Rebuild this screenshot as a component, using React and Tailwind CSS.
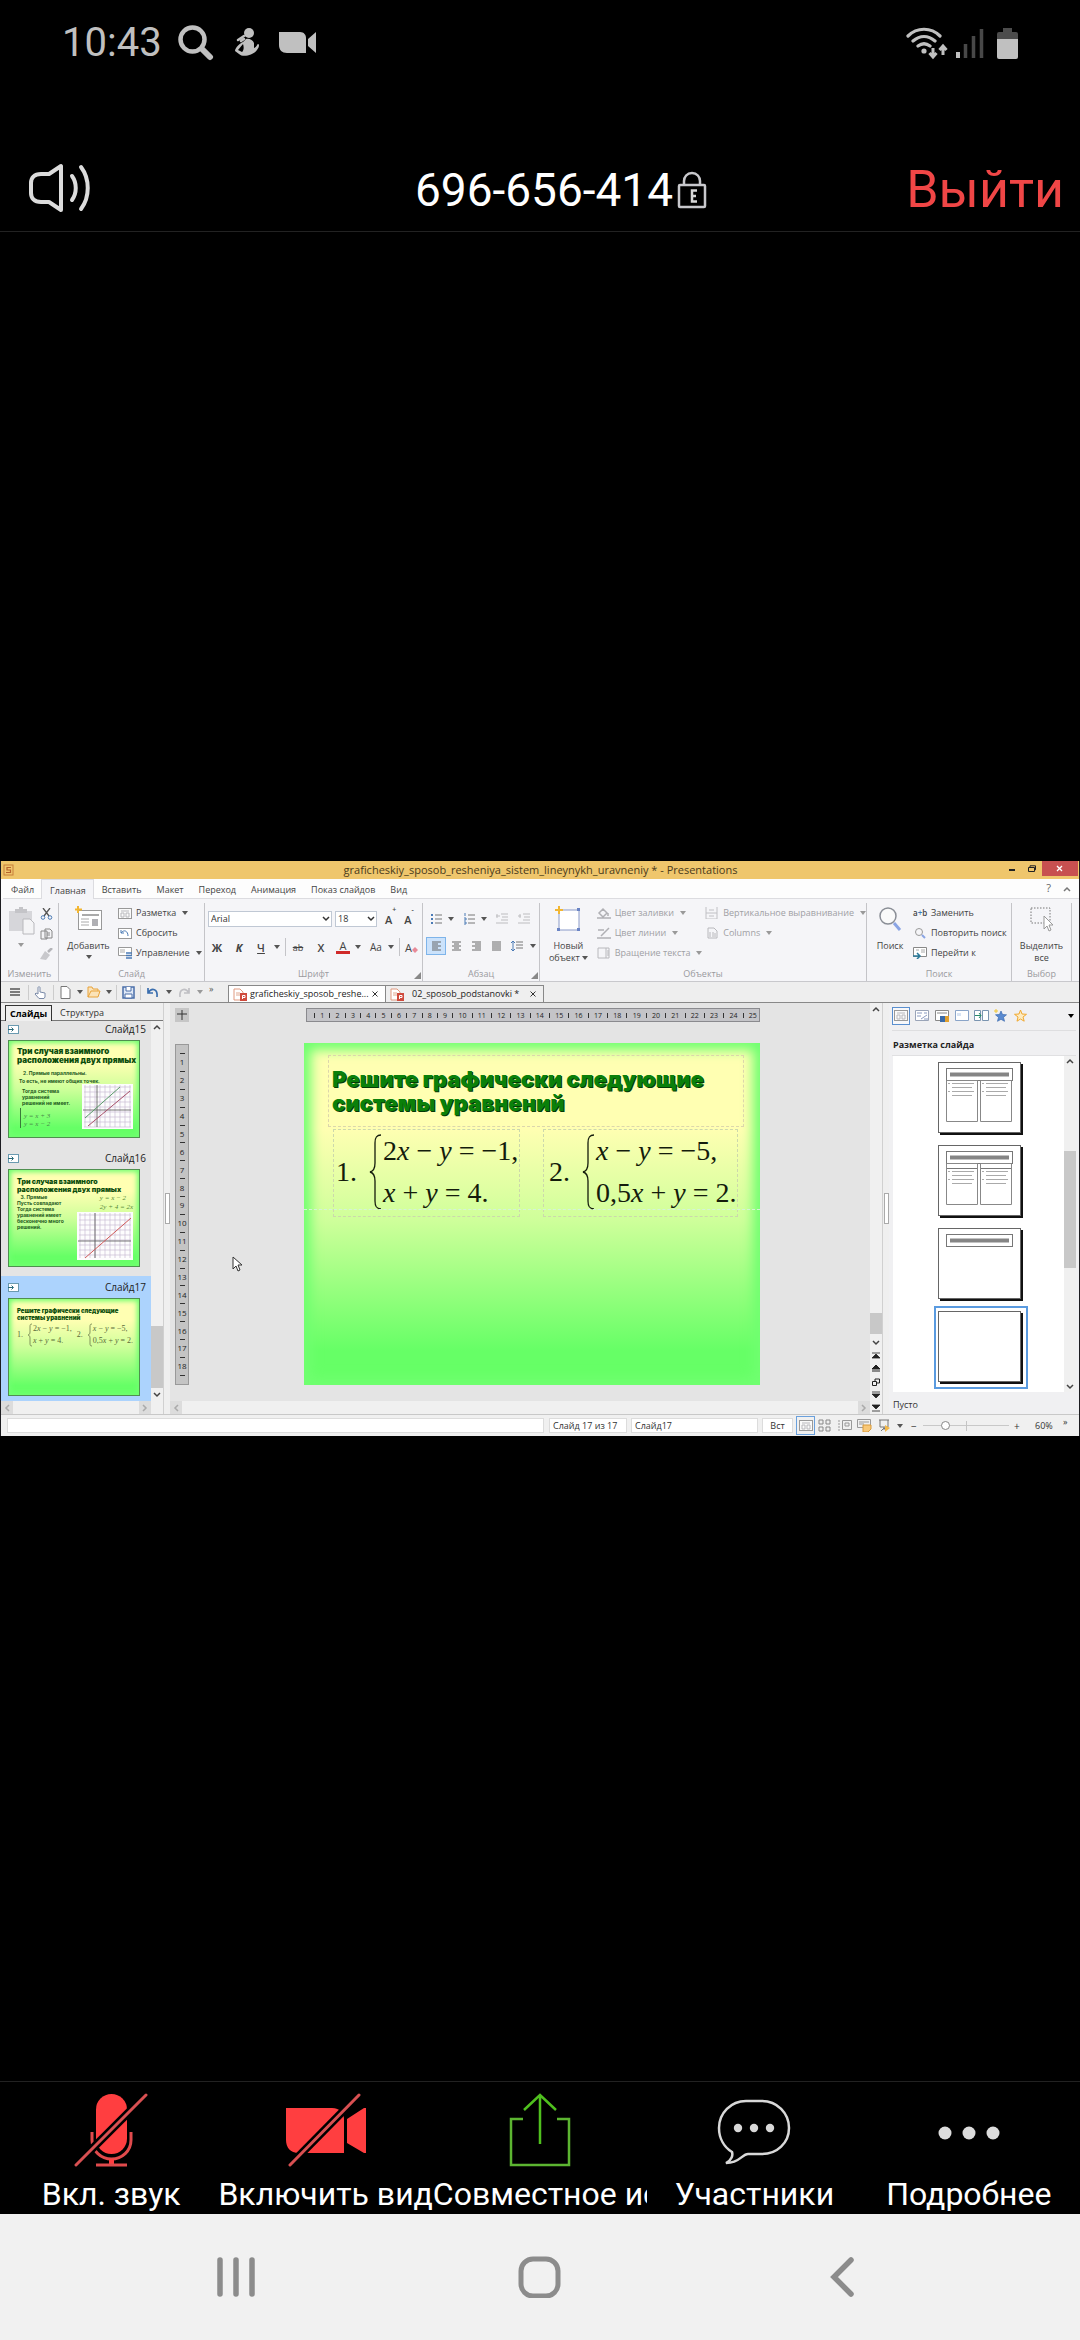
import { Fragment } from 'react';
import clsx from 'clsx';

const uiFont = "font-['Open_Sans','Noto_Sans',sans-serif]";

/* ---------- Small shared pieces ---------- */

function Svg({ w, h, children, className }) {
  return (
    <svg
      width={w}
      height={h}
      viewBox={`0 0 ${w} ${h}`}
      fill="none"
      className={clsx('shrink-0', className)}
      aria-hidden="true"
    >
      {children}
    </svg>
  );
}

function Caret({ className = 'text-[#555]' }) {
  return (
    <Svg w={6} h={4} className={className}>
      <path d="M0 0h6L3 4z" fill="currentColor" />
    </Svg>
  );
}

function Chevron({ dir = 'down', className = 'text-[#444]' }) {
  const paths = {
    down: 'M1 2l3 3 3-3',
    up: 'M1 6l3-3 3 3',
    left: 'M6 1L3 4l3 3',
    right: 'M2 1l3 3-3 3',
  };
  return (
    <Svg w={8} h={8} className={className}>
      <path d={paths[dir]} stroke="currentColor" strokeWidth="1.5" />
    </Svg>
  );
}

function VLine({ className = 'h-4 bg-[#c4c4c8]' }) {
  return <span className={clsx('w-px shrink-0', className)} />;
}

/* ---------- Phone status bar ---------- */

function StatusBar() {
  return (
    <div className="flex h-[86px] items-center justify-between pl-[62px] pr-[62px] text-[#c0c0c0]">
      <div className="flex items-center">
        <span className="w-[100px] text-[40px] leading-none">10:43</span>
        <Svg w={36} h={36} className="ml-4">
          <circle cx="14.5" cy="14.5" r="12" stroke="currentColor" strokeWidth="4.5" />
          <path d="M24 24l8 8" stroke="currentColor" strokeWidth="6" strokeLinecap="round" />
        </Svg>
        <Svg w={28} h={32} className="ml-5">
          <circle cx="15" cy="6" r="5" fill="currentColor" />
          <path d="M10 9L4 13M10 12l-3 2" stroke="currentColor" strokeWidth="2.5" strokeLinecap="round" />
          <path d="M12 12c3-1 7 1 8 4v5c3-1 3-4 4-4s2 2-1 6c-3 5-14 8-18 4L1 24c0-3 5-8 8-9zM9 17l-5 6 4 2c2-2 2-5 1-8z" fill="currentColor" fillRule="evenodd" />
        </Svg>
        <Svg w={38} h={22} className="ml-4">
          <path d="M1 0h21c4 0 6 3 6 6v15H9c-5 0-8-3-8-8zM38 0v21l-8-7V7z" fill="currentColor" />
        </Svg>
      </div>
      <div className="flex items-center">
        <Svg w={42} h={34}>
          <path d="M2 10c9-9 23-9 32 0M7 15c7-6 15-6 22 0M12 20c4-3 8-3 12 0" stroke="currentColor" strokeWidth="3.2" strokeLinecap="round" />
          <circle cx="18" cy="25" r="2.6" fill="currentColor" />
          <path d="M27 22v8M23.500 27l3.500 4 3.500-4M37 29v-8M33.500 24l3.500-4 3.500 4" stroke="currentColor" strokeWidth="3" />
        </Svg>
        <Svg w={28} h={32} className="ml-2">
          <path d="M2 25v6" stroke="currentColor" strokeWidth="4" />
          <path d="M9.500 17v14M17.500 9v22M25.500 2v29" stroke="#484848" strokeWidth="3.500" />
        </Svg>
        <Svg w={21} h={33} className="ml-[13px]">
          <path d="M6 1h9v4h4a2 2 0 012 2v6H0V7a2 2 0 012-2h4z" fill="#4c4c4c" />
          <path d="M0 12h21v18a2 2 0 01-2 2H2a2 2 0 01-2-2z" fill="currentColor" />
        </Svg>
      </div>
    </div>
  );
}

/* ---------- Meeting header ---------- */

function MeetingHeader() {
  return (
    <header className="flex h-[146px] items-end border-b border-[#222] pb-[14px]">
      <div className="flex-1 pl-7">
        <button type="button" aria-label="Динамик" className="flex h-[58px] items-center">
          <Svg w={64} h={50}>
            <path d="M13 11h8l12-8v44l-12-8h-8c-7 0-10-4-10-9v-10c0-5 3-9 10-9z" stroke="#dcdcdc" strokeWidth="4" strokeLinejoin="round" />
            <path d="M44 13c5 7 5 17 0 24M53 4c9 12 9 30 0 42" stroke="#dcdcdc" strokeWidth="4" strokeLinecap="round" />
          </Svg>
        </button>
      </div>
      <h1 className="text-[46px] leading-[54px] text-white">696-656-414</h1>
      <div className="flex flex-1 items-center justify-between pl-1 pr-4">
        <Svg w={30} h={38}>
          <path d="M7 14v-4c0-4 3-8 8-8s8 4 8 8v4" stroke="#c8c8cc" strokeWidth="2.500" />
          <rect x="2" y="14" width="26" height="22" rx="1" stroke="#c8c8cc" strokeWidth="2.500" />
          <path d="M20 19.500h-5v11h5M15 25h4" stroke="#d8d8d8" strokeWidth="2.500" />
        </Svg>
        <button type="button" className="text-[52px] leading-[54px] text-[#f04646]">Выйти</button>
      </div>
    </header>
  );
}

/* ---------- Presentations window: title and menu ---------- */

function TitleBar() {
  return (
    <div className="flex h-[18px] bg-[#efc66c]">
      <div className="flex flex-1 items-center pl-[2px]">
        <Svg w={11} h={12}>
          <rect x="1" y="1" width="9" height="10" stroke="#c87f3a" />
          <path d="M8 3.500H4v2.500h3.500v2.500H3" stroke="#b5612c" strokeWidth="1.200" />
        </Svg>
      </div>
      <span className="whitespace-nowrap text-[11px] leading-[18px] text-[#4a3a1a]">
        graficheskiy_sposob_resheniya_sistem_lineynykh_uravneniy * - Presentations
      </span>
      <div className="flex flex-1 items-start justify-end pr-px">
        <button type="button" aria-label="Свернуть" className="flex h-4 w-5 items-center justify-center">
          <Svg w={8} h={8}><path d="M1 5h6" stroke="#222" strokeWidth="2" /></Svg>
        </button>
        <button type="button" aria-label="Развернуть" className="flex h-4 w-5 items-center justify-center">
          <Svg w={8} h={8}><path d="M.5 2.500h6v4h-6zM2 2.500V.8h5.500v4H6.500" stroke="#222" /></Svg>
        </button>
        <button type="button" aria-label="Закрыть" className="flex h-[15px] w-9 items-center justify-center bg-[#c75050]">
          <Svg w={8} h={8}><path d="M1 1l5 5M6 1L1 6" stroke="#fff" strokeWidth="1.300" /></Svg>
        </button>
      </div>
    </div>
  );
}

const menuTabs = ['Файл', 'Главная', 'Вставить', 'Макет', 'Переход', 'Анимация', 'Показ слайдов', 'Вид'];

function MenuRow() {
  return (
    <div className="flex h-5 items-stretch bg-[#fdfdfd] pl-[2px] text-[9px] text-[#444]">
      {menuTabs.map((tab) => (
        <button
          key={tab}
          type="button"
          className={clsx(
            'pl-2 pr-[7px] pt-px leading-none',
            tab === 'Главная' ? 'border border-b-0 border-[#dcdce0] bg-[#f5f5f8]' : 'border-b border-[#dcdce0]'
          )}
        >
          {tab}
        </button>
      ))}
      <div className="flex flex-1 items-center justify-end gap-3 border-b border-[#dcdce0] pr-2 text-[11px] text-[#666]">
        <span>?</span>
        <Chevron dir="up" className="text-[#777]" />
      </div>
    </div>
  );
}

/* ---------- Ribbon ---------- */

function Group({ label, launcher, className, children }) {
  return (
    <section className={clsx('flex shrink-0 flex-col border-r border-[#c4c4c8]', className)}>
      <div className="flex flex-1">{children}</div>
      <div className="relative h-[15px] text-center text-[9px] leading-[16px] text-[#9a9a9e]">
        {label}
        {launcher && (
          <Svg w={7} h={7} className="absolute bottom-[2px] right-px">
            <path d="M7 0v7H0z" fill="#888" />
          </Svg>
        )}
      </div>
    </section>
  );
}

function RibbonItem({ icon, label, caret, muted }) {
  return (
    <button
      type="button"
      className={clsx('flex h-5 items-center whitespace-nowrap', muted ? 'text-[#a0a0a4]' : 'text-[#444]')}
    >
      <span className="flex w-[18px] shrink-0">{icon}</span>
      {label}
      {caret && (
        <span className="ml-[6px]">
          <Caret className={muted ? 'text-[#999]' : 'text-[#555]'} />
        </span>
      )}
    </button>
  );
}

function BigButton({ icon, lines, caret, inlineCaret, className }) {
  return (
    <button type="button" className={clsx('flex flex-col items-center text-[#444]', className)}>
      <span className="flex h-[34px] items-start">{icon}</span>
      {lines.map((line, i) => (
        <span key={line} className="flex items-center gap-[2px] leading-[12px]">
          {line}
          {inlineCaret && i === lines.length - 1 && <Caret />}
        </span>
      ))}
      {caret && <span className="flex h-[10px] items-center"><Caret /></span>}
    </button>
  );
}

function ListIcon({ numbered, color = '#777' }) {
  return (
    <Svg w={11} h={12}>
      <path d="M4 2h7M4 6h7M4 10h7" stroke={color} />
      {numbered ? (
        <path d="M1 0v3M0 5h2v2H0M0 9h2v2H0" stroke="#4a7ab5" />
      ) : (
        <path d="M0 2h2M0 6h2M0 10h2" stroke="#4a7ab5" strokeWidth="2" />
      )}
    </Svg>
  );
}

function IndentIcon({ flip }) {
  return (
    <Svg w={12} h={12}>
      <path d={flip ? 'M5 1h7M6 4h6M5 7h7M0 10h12M0 3h3M2 1v4' : 'M5 1h7M6 4h6M5 7h7M0 10h12M0 3h4M1 1v4'} stroke="#bdbdc0" />
    </Svg>
  );
}

const alignPaths = {
  left: 'M0 1h9M0 3h6M0 5h9M0 7h6M0 9h9',
  center: 'M0 1h9M2 3h5M0 5h9M2 7h5M0 9h9',
  right: 'M0 1h9M3 3h6M0 5h9M3 7h6M0 9h9',
  justify: 'M0 1h9M0 3h9M0 5h9M0 7h9M0 9h9',
};

function Combo({ label, value, className }) {
  return (
    <div className={clsx('relative flex h-4 items-center border border-[#c0c8d4] bg-white', className)}>
      <select
        aria-label={label}
        defaultValue={value}
        className="h-[14px] w-full appearance-none bg-transparent pl-[2px] text-[9px] leading-[14px] text-[#333] outline-none"
      >
        <option>{value}</option>
      </select>
      <span className="pointer-events-none absolute right-px">
        <Chevron className="text-[#333]" />
      </span>
    </div>
  );
}

function SlideMiniIcon({ color = '#999', accent = '#b8b8bc' }) {
  return (
    <Svg w={14} h={11}>
      <rect x=".5" y=".5" width="13" height="10" fill="#fafafa" stroke={color} />
      <path d="M3 3h8M3 5h3v4H3zM8 5h3v4H8z" stroke={accent} />
    </Svg>
  );
}

function Ribbon() {
  return (
    <div className="flex h-[83px] border-b border-[#c8c8cc] bg-[#f5f5f8] pt-1 text-[9px]">
      {/* Изменить */}
      <Group label="Изменить" className="w-[58px]">
        <button type="button" aria-label="Вставить" className="flex w-[36px] flex-col items-center gap-2 pl-[4px] pt-1">
          <Svg w={27} h={28}>
            <path d="M1 4h23v20H1z" fill="#d6d6da" />
            <path d="M7 2h4V0h4v2h4v4H7z" fill="#c4c4c8" />
            <path d="M15 12h7l4 4v11H15z" fill="#f4f4f6" stroke="#b8b8bc" />
          </Svg>
          <Caret className="text-[#999]" />
        </button>
        <div className="flex flex-col gap-[8px] pl-[3px] pt-[5px]">
          <Svg w={13} h={12}>
            <path d="M3 0l6 8M10 0L4 8" stroke="#555" strokeWidth="1.300" />
            <circle cx="3" cy="9.500" r="1.800" stroke="#4a7ab5" />
            <circle cx="10" cy="9.500" r="1.800" stroke="#4a7ab5" />
          </Svg>
          <Svg w={13} h={12}>
            <path d="M1 3h6v8H1zM5 1h5l2 2v7H5z" fill="#f4f4f6" stroke="#888" />
            <path d="M7 5h3M7 7h3" stroke="#888" />
          </Svg>
          <Svg w={13} h={12}>
            <path d="M12 0L8 4" stroke="#b4b4b8" strokeWidth="2.500" />
            <path d="M5 3l5 4-4 5-6-1z" fill="#c8c8cc" />
          </Svg>
        </div>
      </Group>

      {/* Слайд */}
      <Group label="Слайд" className="w-[146px]">
        <BigButton
          className="w-[59px] pt-[3px]"
          lines={['Добавить']}
          caret
          icon={
            <Svg w={28} h={26}>
              <rect x="3.500" y="4.500" width="23" height="19" fill="#fff" stroke="#999" />
              <path d="M7 9h17" stroke="#aaa" strokeWidth="2" />
              <path d="M6 13h8M6 16h8M6 19h8" stroke="#aaa" />
              <rect x="17" y="13" width="6" height="7" fill="#b0b0b4" />
              <path d="M3 0v7M0 3.500h7" stroke="#f2b632" strokeWidth="2" />
            </Svg>
          }
        />
        <div className="flex flex-col">
          <RibbonItem icon={<SlideMiniIcon />} label="Разметка" caret />
          <RibbonItem
            icon={<Svg w={14} h={11}><rect x=".5" y=".5" width="13" height="10" fill="#fff" stroke="#999" /><path d="M3 5V2M3 5h3M3 5c3-4 7-2 7 3" stroke="#4a7ab5" /></Svg>}
            label="Сбросить"
          />
          <RibbonItem
            icon={<Svg w={14} h={12}><path d="M.5.5h13v8H.5z" fill="#fff" stroke="#999" /><path d="M2 3h5M2 5h5" stroke="#aaa" /><path d="M8 6h6M8 8.500h6M8 11h6" stroke="#4a7ab5" strokeWidth="1.500" /></Svg>}
            label="Управление"
            caret
          />
        </div>
      </Group>

      {/* Шрифт */}
      <Group label="Шрифт" launcher className="w-[218px]">
        <div className="flex w-full flex-col pl-[3px] pt-2 text-[#444]">
          <div className="flex items-center">
            <Combo label="Шрифт" value="Arial" className="w-[124px]" />
            <Combo label="Размер" value="18" className="ml-[3px] w-[42px]" />
            <button type="button" className="ml-2 flex text-[11px] font-semibold leading-none">A<sup className="text-[7px]">+</sup></button>
            <button type="button" className="ml-[8px] flex text-[11px] font-semibold leading-none">A<sup className="text-[7px]">-</sup></button>
          </div>
          <div className="mt-3 flex h-4 items-center text-[11px] leading-none">
            <button type="button" className="w-[18px] font-bold">Ж</button>
            <button type="button" className="ml-1 w-[18px] font-bold italic">К</button>
            <button type="button" className="ml-1 w-[18px] font-semibold underline">Ч</button>
            <span className="ml-[4px]"><Caret /></span>
            <VLine className="ml-[5px] h-[18px] bg-[#c4c4c8]" />
            <button type="button" className="ml-[6px] w-[12px] text-[9px] line-through">ab</button>
            <button type="button" className="ml-[10px] w-[14px] font-semibold">X</button>
            <button type="button" className="ml-[8px] w-[14px] border-b-[3px] border-[#d02a2a] text-[11px] leading-[10px]">A</button>
            <span className="ml-[5px]"><Caret /></span>
            <button type="button" className="ml-[8px] w-[14px] text-[10px]">Aa</button>
            <span className="ml-[5px]"><Caret /></span>
            <VLine className="ml-[5px] h-[18px] bg-[#c4c4c8]" />
            <button type="button" className="ml-[5px] flex items-end">
              A
              <Svg w={6} h={6}><path d="M0 3l3-3 3 3-3 3z" fill="#e88a98" /></Svg>
            </button>
          </div>
        </div>
      </Group>

      {/* Абзац */}
      <Group label="Абзац" launcher className="w-[117px]">
        <div className="flex w-full flex-col pl-[3px] pt-2">
          <div className="flex h-4 items-center pl-[5px]">
            <ListIcon />
            <span className="ml-[6px]"><Caret /></span>
            <span className="ml-[10px]"><ListIcon numbered /></span>
            <span className="ml-[6px]"><Caret /></span>
            <span className="ml-[9px]"><IndentIcon /></span>
            <span className="ml-[10px]"><IndentIcon flip /></span>
          </div>
          <div className="mt-[10px] flex h-[18px] items-center">
            {Object.entries(alignPaths).map(([name, d]) => (
              <button
                key={name}
                type="button"
                aria-label={name}
                className={clsx(
                  'flex h-[18px] w-5 items-center justify-center border',
                  name === 'left' ? 'border-[#7eb4ea] bg-[#cbe2fb]' : 'border-transparent'
                )}
              >
                <Svg w={9} h={10}><path d={d} stroke="#666" /></Svg>
              </button>
            ))}
            <Svg w={12} h={12} className="ml-[5px]">
              <path d="M5 2h7M5 5h7M5 8h7" stroke="#777" />
              <path d="M2 1v10M0 3l2-2 2 2M0 9l2 2 2-2" stroke="#4a7ab5" />
            </Svg>
            <span className="ml-[7px]"><Caret /></span>
          </div>
        </div>
      </Group>

      {/* Объекты */}
      <Group label="Объекты" className="min-w-0 flex-1">
        <BigButton
          className="w-[57px] pt-[3px]"
          lines={['Новый', 'объект']}
          inlineCaret
          icon={
            <Svg w={26} h={28}>
              <path d="M4 4h20v20H4z" fill="#fff" stroke="#8a9ac8" />
              <path d="M22 2h3v3h-3zM2 22h3v3H2zM22 22h3v3h-3z" fill="#6a84c4" />
              <path d="M4 0v8M0 4h8" stroke="#f2b632" strokeWidth="2" />
            </Svg>
          }
        />
        <div className="flex w-[109px] flex-col">
          <RibbonItem muted caret label="Цвет заливки" icon={<Svg w={14} h={12}><path d="M0 11h14M2 6l4-4 4 4-4 4zM11 6v3" stroke="#b0b0b4" strokeWidth="1.500" /></Svg>} />
          <RibbonItem muted caret label="Цвет линии" icon={<Svg w={14} h={12}><path d="M0 11h14M4 9L12 1M1 3h6" stroke="#b0b0b4" strokeWidth="1.500" /></Svg>} />
          <RibbonItem muted caret label="Вращение текста" icon={<Svg w={14} h={12}><path d="M1 1h11v10H1zM9 1v10M11 3v6" stroke="#b8b8bc" /></Svg>} />
        </div>
        <div className="flex flex-col">
          <RibbonItem muted caret label="Вертикальное выравнивание" icon={<Svg w={14} h={12}><path d="M1 0v12h11V0M1 6h11M4 3h5M4 9h5" stroke="#c0c0c4" /></Svg>} />
          <RibbonItem muted caret label="Columns" icon={<Svg w={14} h={12}><path d="M3 1h6l3 3v7H3zM5 5v5M8 5v5M10 6v4" stroke="#b8b8bc" /></Svg>} />
        </div>
      </Group>

      {/* Поиск */}
      <Group label="Поиск" className="w-[145px]">
        <BigButton
          className="w-[46px] pt-[3px]"
          lines={['Поиск']}
          icon={
            <Svg w={26} h={28}>
              <circle cx="11" cy="10" r="8" fill="#fafafa" stroke="#8a8e96" strokeWidth="1.500" />
              <path d="M17 17l6 7" stroke="#8aa4e4" strokeWidth="3" />
            </Svg>
          }
        />
        <div className="flex flex-col">
          <RibbonItem icon={<span className="text-[8px] font-semibold">a<span className="text-[#3a7ab5]">+</span>b</span>} label="Заменить" />
          <RibbonItem icon={<Svg w={14} h={12}><circle cx="6" cy="5" r="3.500" stroke="#999" /><path d="M9 8l3 3" stroke="#8aa4e4" strokeWidth="2" /></Svg>} label="Повторить поиск" />
          <RibbonItem icon={<Svg w={14} h={12}><path d="M.5.500h13v9H.5z" fill="#fff" stroke="#888" /><path d="M3 3h3M8 3h4M8 5h4" stroke="#aaa" /><path d="M0 9h6M4 6l3 3-3 3" stroke="#2a7a9a" strokeWidth="1.500" /></Svg>} label="Перейти к" />
        </div>
      </Group>

      {/* Выбор */}
      <Group label="Выбор" className="w-[60px]">
        <BigButton
          className="w-full pt-[3px]"
          lines={['Выделить', 'все']}
          icon={
            <Svg w={26} h={28}>
              <path d="M2 2h19v15H2z" stroke="#777" strokeDasharray="1.500 1.500" />
              <path d="M15 10v13l3-3 2 5 2-1-2-5h4z" fill="#fff" stroke="#999" />
            </Svg>
          }
        />
      </Group>
      <div className="w-[7px]" />
    </div>
  );
}

/* ---------- Quick access toolbar and document tabs ---------- */

function DocTab({ name, active }) {
  return (
    <div
      className={clsx(
        'flex h-[17px] w-[158px] items-center border border-b-0 border-[#888] px-[4px] text-[9px] text-[#222]',
        active ? 'bg-white' : 'border-l-0 bg-[#efefef]'
      )}
    >
      <Svg w={14} h={13}>
        <path d="M1 1h6l3 3v8H1z" fill="#fff" stroke="#e09a80" />
        <path d="M3 5h4M3 7h4" stroke="#e0a890" />
        <rect x="7" y="5" width="7" height="8" fill="#cf4a3c" />
        <path d="M9.500 11V7.500h2.500v2H9.500" stroke="#fff" />
      </Svg>
      <span className={clsx('whitespace-nowrap', active ? 'ml-[3px]' : 'ml-[8px]')}>{name}</span>
      <button type="button" aria-label="Закрыть вкладку" className="ml-auto mr-[3px]">
        <Svg w={6} h={6}><path d="M.5.5l5 5M5.500.5l-5 5" stroke="#333" /></Svg>
      </button>
    </div>
  );
}

function QuickBar() {
  return (
    <div className="flex h-[21px] items-end border-b border-[#888] bg-[#eeeeee]">
      <div className="flex h-full w-[227px] items-center pl-[9px]">
        <Svg w={11} h={9}><path d="M0 1h10M0 4h10M0 7h10" stroke="#555" strokeWidth="1.500" /></Svg>
        <VLine className="ml-[7px] h-[15px] bg-[#ccc]" />
        <Svg w={12} h={13} className="ml-[5px]">
          <path d="M4 8V1.500c0-1 2-1 2 0V6l5 1v4l-1 1.500H5L1 8l1-1z" fill="#fff" stroke="#7a8aa8" />
        </Svg>
        <VLine className="ml-[7px] h-[15px] bg-[#ccc]" />
        <Svg w={11} h={13} className="ml-[6px]"><path d="M1 .5h6l3 3v9H1z" fill="#fff" stroke="#777" /></Svg>
        <span className="ml-[6px]"><Caret /></span>
        <Svg w={14} h={12} className="ml-[4px]"><path d="M1 11V1h4l1 2h5v2M1 11l3-6h9l-2 6z" fill="#fbe3b8" stroke="#e8a33a" /></Svg>
        <span className="ml-[5px]"><Caret /></span>
        <VLine className="ml-[4px] h-[15px] bg-[#ccc]" />
        <Svg w={13} h={13} className="ml-[5px]">
          <rect x="1" y="1" width="11" height="11" fill="#dfe8f6" stroke="#4a6ea8" strokeWidth="1.500" />
          <path d="M4 1v4h5V1M3 8h7v4H3z" fill="#fff" stroke="#4a6ea8" />
        </Svg>
        <VLine className="ml-[5px] h-[15px] bg-[#ccc]" />
        <Svg w={12} h={11} className="ml-[6px]"><path d="M1 1v5h5M1 6c4-6 10-4 9 4" stroke="#3a6eae" strokeWidth="1.700" /></Svg>
        <span className="ml-[7px]"><Caret /></span>
        <Svg w={12} h={11} className="ml-[6px]"><path d="M11 1v5H6M11 6C7 0 1 2 2 10" stroke="#c0c0c4" strokeWidth="1.700" /></Svg>
        <span className="ml-[7px]"><Caret className="text-[#999]" /></span>
        <span className="mb-2 ml-[6px] text-[9px] leading-none text-[#555]">»</span>
      </div>
      <DocTab name="graficheskiy_sposob_reshe..." active />
      <DocTab name="02_sposob_podstanovki *" />
    </div>
  );
}

/* ---------- Slide drawings ---------- */

function Equation({ number, first, second, small }) {
  return (
    <div
      className={clsx(
        "flex items-center whitespace-nowrap font-['Liberation_Serif',serif]",
        small ? 'text-[8px] leading-[12px] text-[#5a6a3a]' : 'text-[28px] leading-[42px] text-[#141c0c]'
      )}
    >
      <span>{number}.</span>
      {small ? (
        <Svg w={5} h={24} className="ml-[4px]">
          <path d="M5 1c-2 0-2 1-2 3v5c0 2-1 3-2 3 1 0 2 1 2 3v5c0 2 0 3 2 3" stroke="#6a7a4a" strokeWidth=".8" />
        </Svg>
      ) : (
        <Svg w={12} h={76} className="ml-3">
          <path d="M12 1C7 1 6 4 6 9v20c0 5-1 8-5 9 4 1 5 4 5 9v20c0 5 1 8 6 8" stroke="#141c0c" strokeWidth="1.300" />
        </Svg>
      )}
      <div className={small ? 'ml-px' : 'ml-[2px]'}>
        <div>{first}</div>
        <div>{second}</div>
      </div>
    </div>
  );
}

const eqs = [
  {
    number: 1,
    first: <>2<i>x</i> − <i>y</i> = −1,</>,
    second: <><i>x</i> + <i>y</i> = 4.</>,
  },
  {
    number: 2,
    first: <><i>x</i> − <i>y</i> = −5,</>,
    second: <>0,5<i>x</i> + <i>y</i> = 2.</>,
  },
];

function MainSlide() {
  return (
    <div className="relative h-[342px] w-[456px] bg-linear-to-b/srgb from-[#ffffb2] from-25% via-[#ceff9a] via-52% to-[#66ff66] to-90% pl-[24px] pr-[16px] pt-[12px] shadow-[inset_0_0_12px_7px_#70ff70]">
      <div className="flex h-[72px] items-center border border-dashed border-[#dcd6ac] pl-[3px]">
        <h2 className="whitespace-nowrap font-['Inter',sans-serif] text-[22px] font-black leading-[24px] text-[#0a800a] [text-shadow:1px_1px_0_#053a05]">
          Решите графически следующие
          <br />
          системы уравнений
        </h2>
      </div>
      <div className="mt-[2px] flex justify-between pl-[5px] pr-[6px]">
        {eqs.map((eq, i) => (
          <div
            key={eq.number}
            className={clsx('h-[88px] border border-dashed border-[#ccd8ac]', i === 0 ? 'w-[187px] pl-[2px]' : 'w-[195px] pl-[5px]')}
          >
            <Equation {...eq} />
          </div>
        ))}
      </div>
      <div className="absolute inset-x-0 top-[166px] border-t border-dashed border-[#d4f4d8]" />
    </div>
  );
}

function Plot({ w, h, children }) {
  const cols = Array.from({ length: Math.floor(w / 5) }, (_, i) => 3 + i * 5);
  const rows = Array.from({ length: Math.floor(h / 5) }, (_, i) => 3 + i * 5);
  return (
    <Svg w={w} h={h} className="bg-[#fdfdfd]">
      {cols.map((x) => <path key={x} d={`M${x} 1V${h - 2}`} stroke="#c8bcd4" strokeWidth=".7" />)}
      {rows.map((y) => <path key={y} d={`M2 ${y}H${w - 2}`} stroke="#c8bcd4" strokeWidth=".7" />)}
      {children}
    </Svg>
  );
}

const thumbTitle = "font-['Inter',sans-serif] font-black text-[#0b4d0b] whitespace-nowrap";
const thumbBody = "font-['Inter',sans-serif] text-[5px] leading-[6px] font-bold text-[#1c5a1c] whitespace-nowrap";

function ThumbFrame({ children }) {
  return (
    <div className="h-[98px] w-[132px] overflow-hidden border border-[#4f8f4f] bg-linear-to-b/srgb from-[#ffffb2] from-22% via-[#ceff9a] via-50% to-[#66ff66] to-90% pl-[8px] pr-[6px] shadow-[inset_0_0_5px_2px_#70ff70]">
      {children}
    </div>
  );
}

function Thumb15() {
  return (
    <ThumbFrame>
      <p className={clsx(thumbTitle, 'pt-[6px] text-[8px] leading-[9px]')}>
        Три случая взаимного
        <br />
        расположения двух прямых
      </p>
      <p className={clsx(thumbBody, 'mt-[5px] pl-[6px]')}>2. Прямые параллельны.</p>
      <p className={clsx(thumbBody, 'mt-[2px] pl-[2px]')}>То есть, не имеют общих точек.</p>
      <div className="flex justify-between">
        <div>
          <p className={clsx(thumbBody, 'mt-[4px] pl-[5px]')}>
            Тогда система<br />уравнений<br />решений не имеет.
          </p>
          <div className="ml-[3px] mt-[2px] w-6 whitespace-nowrap border-l border-[#3a7a3a] pl-[3px] font-['Liberation_Serif',serif] text-[7px] italic leading-[8px] text-[#4a8a4a]">
            <p className="pt-[4px]">y = x + 3</p>
            <p>y = x − 2</p>
          </div>
        </div>
        <Plot w={51} h={45}>
          <path d="M15 1v42M1 26h48" stroke="#555" strokeWidth=".8" />
          <path d="M3 34L38 3" stroke="#5a9a6a" />
          <path d="M6 42L48 7" stroke="#a8506a" />
        </Plot>
      </div>
    </ThumbFrame>
  );
}

function Thumb16() {
  return (
    <ThumbFrame>
      <p className={clsx(thumbTitle, 'pt-[8px] text-[7px] leading-[8px]')}>
        Три случая взаимного
        <br />
        расположения двух прямых
      </p>
      <div className="flex justify-between">
        <p className={thumbBody}>
          &nbsp;&nbsp;&nbsp;3. Прямые<br />
          Пусть совпадают<br />
          Тогда система<br />
          уравнений имеет<br />
          бесконечно много<br />
          решений.
        </p>
        <div className="flex flex-col items-end">
          <div className="font-['Liberation_Serif',serif] text-[7px] italic leading-[9px] text-[#5a8a3a]">
            <p>y = x − 2</p>
            <p>2y + 4 = 2x</p>
          </div>
          <Plot w={56} h={48}>
            <path d="M18 1v45M1 29h53" stroke="#555" strokeWidth=".8" />
            <path d="M8 46L54 6" stroke="#d05a5a" />
          </Plot>
        </div>
      </div>
    </ThumbFrame>
  );
}

function Thumb17() {
  return (
    <ThumbFrame>
      <p className={clsx(thumbTitle, 'pt-[8px] text-[6px] leading-[7px]')}>
        Решите графически следующие
        <br />
        системы уравнений
      </p>
      <div className="mt-[2px] flex justify-between">
        {eqs.map((eq) => <Equation key={eq.number} {...eq} small />)}
      </div>
    </ThumbFrame>
  );
}

/* ---------- Slides panel ---------- */

const slides = [
  { name: 'Слайд15', Thumb: Thumb15 },
  { name: 'Слайд16', Thumb: Thumb16 },
  { name: 'Слайд17', Thumb: Thumb17, selected: true },
];

function SlidesPanel() {
  return (
    <aside className="flex w-[162px] shrink-0 flex-col bg-[#e4e4e4] text-[10px]">
      <div className="flex h-[18px] items-end border-b border-[#777] bg-[#efefef] pl-1">
        <button type="button" className="-mb-px h-4 border border-b-0 border-[#333] bg-[#efefef] px-1 text-[9px] font-bold leading-[15px]">
          Слайды
        </button>
        <button type="button" className="h-4 px-2 text-[9px] leading-[15px] text-[#333]">Структура</button>
      </div>
      <div className="flex flex-1">
        {/* Scrolled to the end, so the first row is partly hidden */}
        <div className="flex h-[380px] flex-1 flex-col justify-end gap-1 overflow-hidden">
          {slides.map(({ name, Thumb, selected }) => (
            <div key={name} className={clsx('shrink-0 pb-[5px] pl-[7px]', selected && 'bg-[#acd3fd]')}>
              <div className="flex h-[22px] items-center justify-between pr-[5px]">
                <Svg w={11} h={9}>
                  <rect x=".5" y=".5" width="10" height="8" fill="#fff" stroke="#6a9ab0" />
                  <path d="M0 4.500h5M3.500 2.500l2 2-2 2" stroke="#2a6a7a" />
                </Svg>
                <span className="leading-[14px] text-[#222]">{name}</span>
              </div>
              <Thumb />
            </div>
          ))}
        </div>
        <div className="flex w-[12px] flex-col items-center justify-between bg-[#f0f0f0] py-[2px]">
          <Chevron dir="up" />
          <div className="flex w-full flex-col items-center">
            <div className="mb-[3px] h-[62px] w-full bg-[#c8c8c8]" />
            <Chevron />
          </div>
        </div>
      </div>
      <div className="flex h-[13px] justify-between bg-[#f0f0f0] pr-[12px]">
        <span className="flex w-3 items-center justify-center bg-[#dcdcdc]"><Chevron dir="left" className="text-[#aaa]" /></span>
        <span className="flex w-3 items-center justify-center bg-[#dcdcdc]"><Chevron dir="right" className="text-[#aaa]" /></span>
      </div>
    </aside>
  );
}

function Splitter() {
  return (
    <div className="flex w-[7px] shrink-0 items-center justify-center border-l border-[#d0d0d0] bg-[#efefef]">
      <span className="h-[31px] w-[5px] border border-[#aaa] bg-white" />
    </div>
  );
}

/* ---------- Editing area ---------- */

const hTicks = Array.from({ length: 25 }, (_, i) => i + 1);
const vTicks = Array.from({ length: 18 }, (_, i) => i + 1);

function Editor() {
  return (
    <main className="flex min-w-0 flex-1">
      <div className="flex min-w-0 flex-1 flex-col bg-[#e4e4e4]">
        <div className="flex flex-1 pl-[5px] pt-[5px]">
          <div className="flex w-[14px] flex-col">
            <span className="flex h-[14px] items-center justify-center bg-[#c6c6c6]">
              <Svg w={12} h={12}><path d="M6 1v10M1 5h10" stroke="#333" /></Svg>
            </span>
            <div className="mt-[22px] flex h-[341px] flex-col items-center justify-between border border-[#999] bg-[#c4c4c4] py-[8px] text-[8px] leading-[8px] text-[#222]">
              {vTicks.map((n) => (
                <Fragment key={n}>
                  <span className="h-px w-[5px] shrink-0 bg-[#333]" />
                  <span>{n}</span>
                </Fragment>
              ))}
              <span className="h-px w-[5px] shrink-0 bg-[#333]" />
            </div>
          </div>
          {/* Mouse pointer resting beside the slide */}
          <div className="flex flex-1 pl-[42px] pt-[248px]">
            <Svg w={12} h={17}>
              <path d="M2 1v12l3-3 2 5 2-1-2-5h4z" fill="#fff" stroke="#333" />
            </Svg>
          </div>
          <div className="mr-[110px] flex flex-col items-end">
            <div className="flex h-[14px] w-[454px] items-center justify-between border border-[#8a8a8e] bg-[#c4c4c8] pl-[7px] pr-[2px] text-[7px] leading-none text-[#222]">
              {hTicks.map((n) => (
                <Fragment key={n}>
                  <span className="h-[5px] w-px shrink-0 bg-[#333]" />
                  <span>{n}</span>
                </Fragment>
              ))}
            </div>
            <div className="mt-[21px]"><MainSlide /></div>
          </div>
        </div>
        <div className="flex h-[13px] justify-between bg-[#f0f0f0]">
          <span className="flex w-3 items-center justify-center bg-[#dcdcdc]"><Chevron dir="left" className="text-[#aaa]" /></span>
          <span className="flex w-3 items-center justify-center bg-[#dcdcdc]"><Chevron dir="right" className="text-[#aaa]" /></span>
        </div>
      </div>
      <div className="flex w-[12px] flex-col items-center justify-between bg-[#f0f0f0] pb-[2px] pt-[2px]">
        <Chevron dir="up" />
        <div className="flex w-full flex-col items-center gap-[5px]">
          <div className="h-[21px] w-full bg-[#c8c8c8]" />
          <Chevron />
          <Svg w={8} h={8}><path d="M0 1h8M4 2l4 4H0z" stroke="#222" strokeWidth=".8" fill="#222" /></Svg>
          <Svg w={8} h={8}><path d="M4 0l4 4H0zM0 6h8" stroke="#222" fill="#222" /></Svg>
          <Svg w={8} h={8}><path d="M.5 3.500h4v4h-4zM3 3V1h4.500v4H5" stroke="#222" /></Svg>
          <Svg w={8} h={8}><path d="M0 1h8M4 7l4-4H0z" stroke="#222" strokeWidth=".8" fill="#222" /></Svg>
          <Svg w={8} h={8}><path d="M4 5l4-4H0zM0 7h8" stroke="#222" strokeWidth=".8" fill="#222" /></Svg>
        </div>
      </div>
    </main>
  );
}

/* ---------- Layout panel ---------- */

function LayoutCard({ kind, selected }) {
  return (
    <button
      type="button"
      aria-label={`Макет ${kind}`}
      className={clsx('flex h-[83px] w-[94px] items-center justify-center border-2', selected ? 'border-[#5a9be0]' : 'border-transparent')}
    >
      <Svg w={85} h={73}>
        <path d="M2 2h83v71H2z" fill="#111" />
        <rect x=".5" y=".5" width="82" height="70" fill="#fff" stroke="#666" />
        {kind !== 'empty' && (
          <>
            <rect x="8.500" y="6.500" width="66" height="12" stroke="#777" />
            <path d="M12 12.500h59" stroke="#858585" strokeWidth="4" />
          </>
        )}
        {(kind === 'two' || kind === 'compare') && (
          <path d="M8.500 18.500h31v41h-31zM42.500 18.500h31v41h-31z" stroke="#888" />
        )}
        {kind === 'two' && (
          <path d="M10 21.500h2M14 21.500h22M14 25.500h20M10 29.500h2M14 29.500h22M14 33.500h20M44 21.500h2M48 21.500h22M48 25.500h20M44 29.500h2M48 29.500h22M48 33.500h20" stroke="#aaa" />
        )}
        {kind === 'compare' && (
          <>
            <path d="M9 23.500h30M43 23.500h30" stroke="#777" />
            <path d="M10 26.500h2M14 26.500h22M14 30.500h20M10 34.500h2M14 34.500h22M14 38.500h20M44 26.500h2M48 26.500h22M48 30.500h20M44 34.500h2M48 34.500h22M48 38.500h20" stroke="#aaa" />
          </>
        )}
      </Svg>
    </button>
  );
}

function LayoutPanel() {
  return (
    <aside className="flex w-[190px] shrink-0 flex-col bg-[#f0f0f2] pl-[3px] pr-[3px] text-[10px]">
      <div className="flex h-[28px] items-center border-b border-[#dedee0] pb-[2px]">
        <span className="flex h-[18px] w-[18px] items-center justify-center border border-[#5a8fcf] bg-[#f8f8fa]">
          <SlideMiniIcon />
        </span>
        <Svg w={14} h={12} className="ml-[5px]"><path d="M.5.500h13v10H.5z" fill="#fff" stroke="#9aa4b8" /><path d="M2 3h5M9 3h3M2 6h4M6 9l6-4M9 9h4" stroke="#8a9ac0" /></Svg>
        <Svg w={14} h={12} className="ml-[6px]"><path d="M.5.500h13v10H.5z" fill="#fff" stroke="#888" /><path d="M2 3h10" stroke="#888" /><rect x="5" y="6" width="5" height="6" fill="#3a6aa8" /><rect x="10" y="6" width="4" height="6" fill="#e0a030" /></Svg>
        <Svg w={14} h={12} className="ml-[6px]"><path d="M.5.500h13v10H.5z" fill="#fff" stroke="#8aa4c8" /><path d="M2 3h4v3H2z" fill="#d8e4f4" /></Svg>
        <Svg w={15} h={12} className="ml-[5px]"><path d="M.5.500h6v10h-6zM8.500.500h6v10h-6z" fill="#fff" stroke="#7a94b0" /><path d="M1 5.500h6M5 3l2 2.500L5 8" stroke="#2a8a6a" /></Svg>
        <Svg w={13} h={13} className="ml-[5px]"><path d="M7 2l1.500 3.500 4 .3-3 2.500 1 4L7 10.300 3.500 12.300l1-4-3-2.500 4-.3z" fill="#5a8ad0" stroke="#3a6ab0" strokeWidth=".7" /><path d="M2 0v4M0 2h4" stroke="#f2c632" /></Svg>
        <Svg w={13} h={13} className="ml-[7px]"><path d="M6.500 1L8 5l4.500.3-3.500 2.700 1.200 4.200L6.500 10 3 12.200 4 8 .5 5.300 5 5z" fill="#fdebc0" stroke="#f0a830" /></Svg>
        <span className="ml-auto mr-[2px]"><Caret className="text-black" /></span>
      </div>
      <h3 className="h-[24px] pl-px text-[9px] font-bold leading-[28px] text-[#222]">Разметка слайда</h3>
      <div className="flex h-[337px] border-t border-[#e0e0e2] pl-px">
        <div className="flex flex-1 flex-col items-center bg-white pl-1 pt-px">
          <LayoutCard kind="two" />
          <LayoutCard kind="compare" />
          <LayoutCard kind="title" />
          <LayoutCard kind="empty" selected />
        </div>
        <div className="flex w-[12px] flex-col items-center bg-[#f0f0f0] py-px">
          <Chevron dir="up" />
          <div className="mt-[86px] h-[117px] w-full bg-[#c8c8c8]" />
          <span className="mt-auto"><Chevron /></span>
        </div>
      </div>
      <p className="pl-px pt-[6px] text-[9px] leading-[13px] text-[#333]">Пусто</p>
    </aside>
  );
}

/* ---------- Window status bar ---------- */

function Field({ className, children }) {
  return (
    <span className={clsx('h-[15px] border border-[#dcdcdc] bg-white px-[3px] leading-[13px]', className)}>
      {children}
    </span>
  );
}

function WindowStatus() {
  return (
    <footer className="flex h-[22px] items-center border-t border-[#c8c8c8] bg-[#f0f0f0] pl-[6px] text-[9px] text-[#333]">
      <Field className="mr-[5px] min-w-0 flex-1" />
      <Field className="mr-[4px] w-[78px] whitespace-nowrap">Слайд 17 из 17</Field>
      <Field className="mr-[4px] w-[127px]">Слайд17</Field>
      <Field className="mr-[3px] w-[31px] text-center">Вст</Field>
      <span className="flex h-[19px] w-[19px] items-center justify-center border border-[#6aa0dc]">
        <SlideMiniIcon />
      </span>
      <Svg w={14} h={13} className="ml-[3px]"><path d="M1 1h4v4H1zM8 1h4v4H8zM1 8h4v4H1zM8 8h4v4H8z" stroke="#888" /></Svg>
      <Svg w={14} h={12} className="ml-[6px]"><path d="M4.500.500h9v9h-9zM0 1h2M0 4h2M0 7h2M0 10h2M7 3h4v3H7z" stroke="#999" /></Svg>
      <Svg w={15} h={13} className="ml-[5px]"><path d="M.5.500h13v8H.5zM2 3h10M2 5h5" stroke="#999" /><path d="M6 6h8v4l-3 3H6z" fill="#f8c878" stroke="#d89a3a" /></Svg>
      <Svg w={13} h={14} className="ml-[6px]"><path d="M1 1h10M2 1v7h8V1M6 8v3M3 12l3-3 2 2" stroke="#777" /><path d="M7 6l5 3-5 4z" fill="#f2b84a" /></Svg>
      <span className="ml-[6px]"><Caret /></span>
      <span className="ml-[8px] w-[7px] text-[10px] leading-none">−</span>
      <div className="relative ml-[5px] flex w-[86px] items-center">
        <input
          type="range"
          aria-label="Масштаб"
          min="0"
          max="100"
          defaultValue="24"
          className="h-[10px] w-full appearance-none bg-transparent [&::-webkit-slider-runnable-track]:h-px [&::-webkit-slider-runnable-track]:bg-[#c8c8c8] [&::-webkit-slider-thumb]:-mt-1 [&::-webkit-slider-thumb]:size-[9px] [&::-webkit-slider-thumb]:appearance-none [&::-webkit-slider-thumb]:rounded-full [&::-webkit-slider-thumb]:border [&::-webkit-slider-thumb]:border-[#888] [&::-webkit-slider-thumb]:bg-white"
        />
        <span className="absolute left-1/2 h-[10px] w-px bg-[#c4c4c4]" />
      </div>
      <span className="ml-[5px] w-[7px] text-[10px] leading-none">+</span>
      <span className="ml-[14px] w-[28px]">60%</span>
      <span className="mb-2 w-[16px] leading-none">»</span>
    </footer>
  );
}

function PresentationsWindow() {
  return (
    <div className={clsx('w-full border-x border-[#1c1c20] bg-[#efefef]', uiFont)}>
      <TitleBar />
      <MenuRow />
      <Ribbon />
      <QuickBar />
      <div className="flex">
        <SlidesPanel />
        <Splitter />
        <Editor />
        <Splitter />
        <LayoutPanel />
      </div>
      <WindowStatus />
    </div>
  );
}

/* ---------- Meeting controls ---------- */

const controls = [
  {
    label: 'Вкл. звук',
    icon: (
      <Svg w={74} h={74}>
        <rect x="22" y="1" width="31" height="60" rx="15.500" fill="#ff3e40" />
        <path d="M18 39v8c0 11 9 19 19.500 19S57 58 57 47v-8" stroke="#e04a4c" strokeWidth="3" />
        <path d="M37.500 66v7" stroke="#ff3e40" strokeWidth="5" />
        <path d="M22 72h31" stroke="#e04a4c" strokeWidth="3" />
        <path d="M2 72L72 2" stroke="#000" strokeWidth="8" />
        <path d="M2 72L72 2" stroke="#d85052" strokeWidth="3" strokeLinecap="round" />
      </Svg>
    ),
  },
  {
    label: 'Включить видео',
    icon: (
      <Svg w={80} h={74}>
        <path d="M0 15h46c8 0 12 5 12 11v34H13C4 60 0 54 0 47zM80 15v45h-2L61 50V26l17-11z" fill="#ff3e40" />
        <path d="M4 72L73 2" stroke="#000" strokeWidth="8" />
        <path d="M4 72L73 2" stroke="#d85052" strokeWidth="3" strokeLinecap="round" />
      </Svg>
    ),
  },
  {
    label: 'Совместное использование',
    icon: (
      <Svg w={62} h={74}>
        <path d="M14 26H2v46h58V26H48" stroke="#5cb531" strokeWidth="2.500" />
        <path d="M31 51V2M15 17L31 2l16 15" stroke="#4fc01e" strokeWidth="2.500" />
      </Svg>
    ),
  },
  {
    label: 'Участники',
    icon: (
      <Svg w={74} h={74}>
        <path d="M29 8h16c15 0 27 12 27 27S60 61 45 61H31c-6 0-8 9-22 9 6-3 7-8 6-11C7 54 2 45 2 35 2 20 14 8 29 8z" stroke="#d8d8d8" strokeWidth="2.500" />
        <circle cx="21" cy="35" r="4.200" fill="#d8d8d8" />
        <circle cx="37" cy="35" r="4.200" fill="#d8d8d8" />
        <circle cx="53" cy="35" r="4.200" fill="#d8d8d8" />
      </Svg>
    ),
  },
  {
    label: 'Подробнее',
    icon: (
      <Svg w={62} h={74}>
        <circle cx="7" cy="40" r="6.500" fill="#dcdcdc" />
        <circle cx="31" cy="40" r="6.500" fill="#dcdcdc" />
        <circle cx="55" cy="40" r="6.500" fill="#dcdcdc" />
      </Svg>
    ),
  },
];

function MeetingControls() {
  return (
    <div className="grid h-[133px] grid-cols-5 border-t border-[#222] px-1 pt-[11px]">
      {controls.map(({ label, icon }) => (
        <button key={label} type="button" className="flex min-w-0 flex-col items-center">
          {icon}
          <span className="mt-[8px] max-w-full overflow-hidden whitespace-nowrap text-[32px] leading-[39px] text-white">
            {label}
          </span>
        </button>
      ))}
    </div>
  );
}

function NavigationBar() {
  return (
    <nav className="grid h-[126px] grid-cols-3 items-center justify-items-center bg-[#f1f1f1] pl-[84px] pr-[87px]">
      <button type="button" aria-label="Недавние">
        <Svg w={40} h={42}>
          <path d="M4 4v34M20 4v34M36 4v34" stroke="#8c8c8c" strokeWidth="5.500" strokeLinecap="round" />
        </Svg>
      </button>
      <button type="button" aria-label="Домой">
        <Svg w={44} h={42}>
          <rect x="4" y="3" width="37" height="37" rx="12" stroke="#8c8c8c" strokeWidth="5" />
        </Svg>
      </button>
      <button type="button" aria-label="Назад">
        <Svg w={26} h={42}>
          <path d="M22 4L5 21l17 17" stroke="#8c8c8c" strokeWidth="5.500" strokeLinecap="round" />
        </Svg>
      </button>
    </nav>
  );
}

export default function App() {
  return (
    <div className="flex min-h-screen flex-col bg-black font-['Roboto',sans-serif]">
      <StatusBar />
      <MeetingHeader />
      <div className="flex flex-1 items-center pb-4">
        <PresentationsWindow />
      </div>
      <MeetingControls />
      <NavigationBar />
    </div>
  );
}
